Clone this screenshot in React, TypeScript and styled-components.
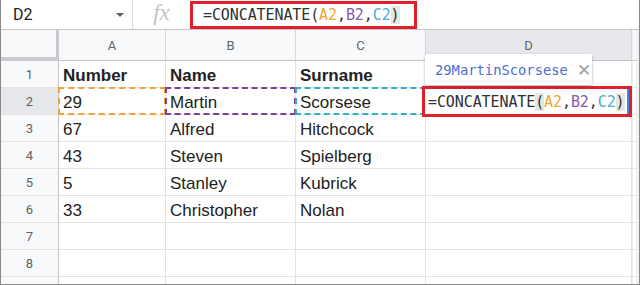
import React from 'react';
import styled, { createGlobalStyle } from 'styled-components';

const GlobalStyle = createGlobalStyle`
  html, body { margin: 0; padding: 0; background: #fff; }
  body { font-family: "Liberation Sans", Arial, sans-serif; }
`;

const Frame = styled.div`
  width: 640px;
  height: 285px;
  box-sizing: border-box;
  border: 1px solid #8a8a8a;
  border-top: none;
  overflow: hidden;
  display: flex;
  flex-direction: column;
`;

const Toolbar = styled.div`
  display: flex;
  align-items: stretch;
  height: 29px;
  border-bottom: 1px solid #c6c6c6;
  background: #fff;
`;

const NameBox = styled.div`
  width: 132px;
  display: flex;
  align-items: center;
  justify-content: space-between;
  padding: 0 8px 0 12px;
  box-sizing: border-box;
  border-right: 1px solid #dadce0;
  font-family: Roboto, "Liberation Sans", sans-serif;
  font-size: 16px;
  color: #202124;
`;

const Caret = styled.span`
  width: 0;
  height: 0;
  border-left: 4px solid transparent;
  border-right: 4px solid transparent;
  border-top: 4px solid #5f6368;
`;

const Fx = styled.div`
  width: 57px;
  display: flex;
  align-items: center;
  justify-content: center;
  font-family: "Liberation Serif", serif;
  font-style: italic;
  font-size: 23px;
  color: #c4c4c4;
  padding-bottom: 3px;
  box-sizing: border-box;
`;

const FormulaArea = styled.div`
  flex: 1;
  display: flex;
  align-items: stretch;
  padding-top: 1px;
`;

const RedBox = styled.div`
  width: 227px;
  box-sizing: border-box;
  border: 3px solid #e0202a;
  display: flex;
  align-items: center;
  padding-left: 10px;
`;

const Formula = styled.span`
  font-family: "DejaVu Sans Mono", "Liberation Mono", monospace;
  font-size: 15px;
  letter-spacing: -0.1px;
  color: #303134;
  white-space: nowrap;
`;

const Ref = styled.span<{ $c: string }>`
  color: ${p => p.$c};
`;

const Paren = styled.span<{ $hl?: boolean }>`
  background: ${p => (p.$hl ? '#e3e8e3' : 'transparent')};
`;

const Grid = styled.div`
  display: grid;
  grid-template-columns: 58px 107px 130px 130px 206px 1fr;
  grid-template-rows: 31px repeat(9, 27px);
  flex: 1;
`;

const Corner = styled.div`
  background: #f8f9fa;
  border-right: 4px solid #c7c9cc;
  border-bottom: 4px solid #c7c9cc;
  box-sizing: border-box;
  margin: 0 -1px 0 0;
`;

const ColHead = styled.div<{ $active?: boolean }>`
  background: ${p => (p.$active ? '#e6e8eb' : '#f8f9fa')};
  border-right: 1px solid #d4d6d8;
  border-bottom: 1px solid #c4c6c8;
  display: flex;
  align-items: center;
  justify-content: center;
  font-family: Roboto, "Liberation Sans", sans-serif;
  font-size: 13px;
  color: #5f6368;
`;

const RowHead = styled.div<{ $active?: boolean }>`
  background: ${p => (p.$active ? '#e6e8eb' : '#f8f9fa')};
  border-right: 1px solid #c4c6c8;
  border-bottom: 1px solid #e2e3e3;
  display: flex;
  align-items: center;
  justify-content: center;
  font-family: Roboto, "Liberation Sans", sans-serif;
  font-size: 13px;
  color: #5f6368;
`;

const Cell = styled.div<{ $bold?: boolean; $dash?: string }>`
  position: relative;
  border-right: 1px solid #e2e3e3;
  border-bottom: 1px solid #e2e3e3;
  display: flex;
  align-items: center;
  padding: 3px 0 0 4px;
  font-size: 17px;
  font-weight: ${p => (p.$bold ? 700 : 400)};
  color: #222;
  white-space: nowrap;

  &::after {
    content: '';
    display: ${p => (p.$dash ? 'block' : 'none')};
    position: absolute;
    inset: -1px -1px -1px -1px;
    border: 2px dashed ${p => p.$dash};
    pointer-events: none;
  }
`;

const Gutter = styled.div`
  background: #fff;
  border-left: 1px solid #eceded;
  border-right: 3px solid #f1f1f1;
  border-bottom: 1px solid #e2e3e3;
`;

const GutterHead = styled(Gutter)`
  background: #f8f9fa;
  border-bottom: 1px solid #c4c6c8;
`;

const Editor = styled.div`
  position: absolute;
  left: -4px;
  top: -2px;
  width: 210px;
  height: 31px;
  box-sizing: border-box;
  border: 3px solid #e0202a;
  background: #fff;
  display: flex;
  align-items: center;
  padding-left: 3px;
  z-index: 2;

  &::after {
    content: '';
    position: absolute;
    right: 0;
    top: 0;
    bottom: 0;
    width: 2px;
    background: #4285f4;
  }
`;

const Tip = styled.div`
  position: absolute;
  left: -1px;
  top: -34px;
  width: 167px;
  height: 31px;
  box-sizing: border-box;
  background: #fff;
  box-shadow: 0 1px 3px rgba(60, 64, 67, 0.3), 0 1px 2px rgba(60, 64, 67, 0.15);
  border-radius: 2px;
  display: flex;
  align-items: center;
  padding-left: 10px;
  gap: 9px;
  z-index: 3;
`;

const TipText = styled.span`
  font-family: "DejaVu Sans Mono", "Liberation Mono", monospace;
  font-size: 13.8px;
  color: #4a6fd0;
`;

const Close = styled.span`
  font-family: "DejaVu Sans", sans-serif;
  font-size: 17px;
  color: #9aa0a6;
`;

const ORANGE = '#f2a23a';
const PURPLE = '#8a5aa8';
const TEAL = '#4aaed0';

function FormulaText({ both }: { both?: boolean }) {
  return (
    <Formula>
      =CONCATENATE<Paren $hl={both}>(</Paren>
      <Ref $c={ORANGE}>A2</Ref>,<Ref $c={PURPLE}>B2</Ref>,<Ref $c={TEAL}>C2</Ref>
      <Paren $hl>)</Paren>
    </Formula>
  );
}

const rows: string[][] = [
  ['Number', 'Name', 'Surname'],
  ['29', 'Martin', 'Scorsese'],
  ['67', 'Alfred', 'Hitchcock'],
  ['43', 'Steven', 'Spielberg'],
  ['5', 'Stanley', 'Kubrick'],
  ['33', 'Christopher', 'Nolan'],
  ['', '', ''],
  ['', '', ''],
  ['', '', ''],
];

const dashes = [ORANGE, '#7b3f96', '#2fb0c6'];

export default function App() {
  return (
    <>
      <GlobalStyle />
      <Frame>
        <Toolbar>
          <NameBox>
            D2
            <Caret />
          </NameBox>
          <Fx>fx</Fx>
          <FormulaArea>
            <RedBox>
              <FormulaText />
            </RedBox>
          </FormulaArea>
        </Toolbar>
        <Grid>
          <Corner />
          {['A', 'B', 'C', 'D'].map(l => (
            <ColHead key={l} $active={l === 'D'}>{l}</ColHead>
          ))}
          <GutterHead />
          {rows.map((r, i) => (
            <React.Fragment key={i}>
              <RowHead $active={i === 1}>{i < 8 ? i + 1 : ''}</RowHead>
              {r.map((v, j) => (
                <Cell key={j} $bold={i === 0} $dash={i === 1 ? dashes[j] : undefined}>
                  {v}
                </Cell>
              ))}
              <Cell>
                {i === 1 && (
                  <>
                    <Tip>
                      <TipText>29MartinScorsese</TipText>
                      <Close>✕</Close>
                    </Tip>
                    <Editor>
                      <FormulaText both />
                    </Editor>
                  </>
                )}
              </Cell>
              <Gutter />
            </React.Fragment>
          ))}
        </Grid>
      </Frame>
    </>
  );
}
